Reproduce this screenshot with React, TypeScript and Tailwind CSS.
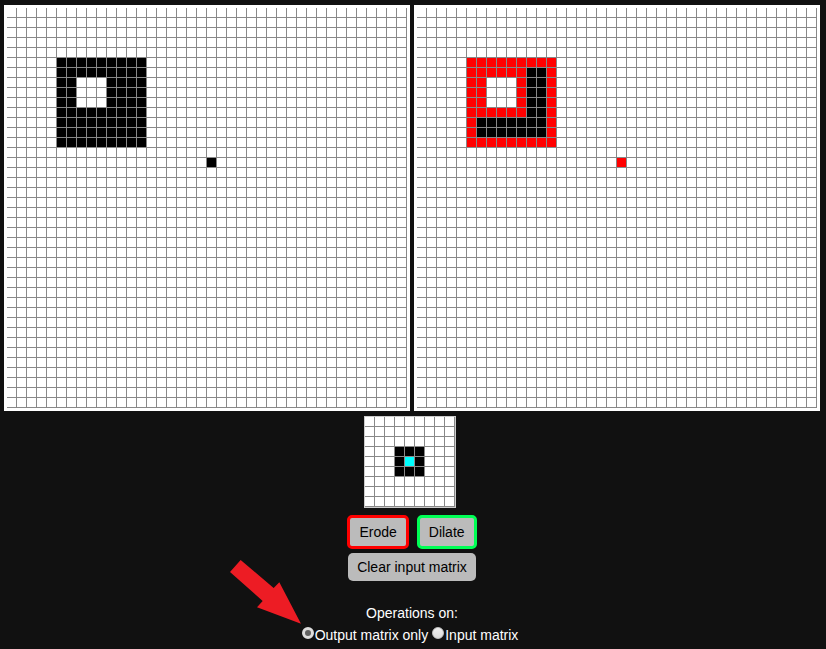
import { useState } from "react";

type Cell = "white" | "black" | "red" | "cyan";

const CELL_COLOURS: Record<Cell, string> = {
  white: "bg-white",
  black: "bg-black",
  red: "bg-[#ff0000]",
  cyan: "bg-[#00ffff]",
};

const SIZE = 40;
const KERNEL_SIZE = 9;

function isSet(row: number, col: number): boolean {
  if (row === 15 && col === 20) return true;
  const inSquare = row >= 5 && row <= 13 && col >= 5 && col <= 13;
  const inHole = row >= 7 && row <= 9 && col >= 7 && col <= 9;
  return inSquare && !inHole;
}

function inputCell(row: number, col: number): Cell {
  return isSet(row, col) ? "black" : "white";
}

// Cells that a 3x3 erosion removes are shown in red.
function outputCell(row: number, col: number): Cell {
  if (!isSet(row, col)) return "white";
  for (let dr = -1; dr <= 1; dr++) {
    for (let dc = -1; dc <= 1; dc++) {
      if (!isSet(row + dr, col + dc)) return "red";
    }
  }
  return "black";
}

function kernelCell(row: number, col: number): Cell {
  if (row === 4 && col === 4) return "cyan";
  return Math.abs(row - 4) <= 1 && Math.abs(col - 4) <= 1 ? "black" : "white";
}

function Matrix({
  size,
  cellAt,
  label,
}: {
  size: number;
  cellAt: (row: number, col: number) => Cell;
  label: string;
}) {
  return (
    <div role="img" aria-label={label}>
      {Array.from({ length: size }, (_, row) => (
        <div key={row} className="flex">
          {Array.from({ length: size }, (_, col) => (
            <div
              key={col}
              className={`size-[10px] shrink-0 border-r border-b border-[#888888] ${CELL_COLOURS[cellAt(row, col)]}`}
            />
          ))}
        </div>
      ))}
    </div>
  );
}

const RADIO =
  "mb-1 size-3 appearance-none rounded-full border border-[#c4c4c4] bg-linear-to-b from-[#efefef] to-[#dcdcdc] checked:border-[3px] checked:border-[#dddddd] checked:bg-[#606060] checked:bg-none";

export default function App() {
  const [target, setTarget] = useState("output");

  return (
    <main className="flex min-h-screen flex-col items-center bg-[#111111] pt-[5px] pr-[2px] font-['Liberation_Sans',Arial,sans-serif] text-sm text-white">
      <div className="flex gap-1">
        <div className="bg-white p-[3px]">
          <Matrix size={SIZE} cellAt={inputCell} label="Input matrix" />
        </div>
        <div className="bg-white p-[3px]">
          <Matrix size={SIZE} cellAt={outputCell} label="Output matrix" />
        </div>
      </div>

      <div className="mt-[5px] mr-1 border border-[#cccccc]">
        <Matrix size={KERNEL_SIZE} cellAt={kernelCell} label="Kernel" />
      </div>

      <div className="mt-[7px] flex gap-2">
        <button type="button" className="rounded-[5px] border-3 border-[#ff0000] bg-[#bbbbbb] px-[9px] py-1 text-black">
          Erode
        </button>
        <button type="button" className="rounded-[5px] border-3 border-[#00ff55] bg-[#bbbbbb] px-[9px] py-1 text-black">
          Dilate
        </button>
      </div>
      <button type="button" className="mt-1 rounded-[5px] bg-[#bbbbbb] px-[9px] py-1 text-black">
        Clear input matrix
      </button>

      <fieldset className="relative mt-[22px]">
        <legend className="mx-auto">Operations on:</legend>
        <div className="mt-[2px] mr-1 flex gap-1">
          <label className="flex items-center gap-px">
            <input
              type="radio"
              name="target"
              className={RADIO}
              checked={target === "output"}
              onChange={() => setTarget("output")}
            />
            Output matrix only
          </label>
          <label className="flex items-center gap-px">
            <input
              type="radio"
              name="target"
              className={RADIO}
              checked={target === "input"}
              onChange={() => setTarget("input")}
            />
            Input matrix
          </label>
        </div>
        <svg
          aria-hidden="true"
          viewBox="15 30 213 192"
          className="absolute right-full bottom-5 mr-px mb-px h-16 w-[71px]"
        >
          <path fill="#ed1c24" d="M47 30 15 66 113 153 96 172 228 221 163 97 146 114Z" />
        </svg>
      </fieldset>
    </main>
  );
}
